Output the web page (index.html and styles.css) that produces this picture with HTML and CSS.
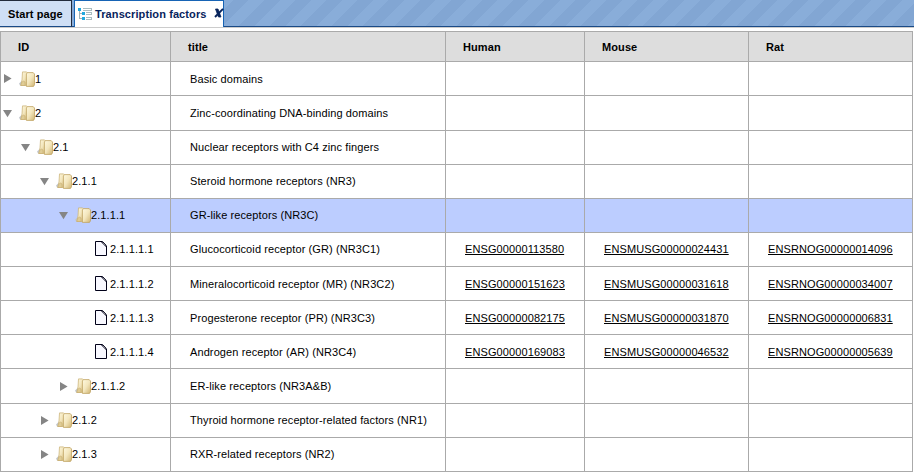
FILE: index.html
```html
<!DOCTYPE html>
<html lang="en">
<head>
<meta charset="utf-8">
<title>Transcription factors</title>
<link rel="stylesheet" href="styles.css">
</head>
<body>
<svg class="defs" width="0" height="0">
  <defs>
    <linearGradient id="g1" x1="0" y1="0" x2="1" y2="1"><stop offset="0" stop-color="#fff9df"/><stop offset=".5" stop-color="#f3e6bd"/><stop offset="1" stop-color="#d0b472"/></linearGradient>
    <symbol id="folder" viewBox="0 0 16 16">
      <path d="M0 12.5L3 9.5V14.5H1Z" fill="#c3c8d0"/>
      <path d="M3.5 .9H7.6L8.6 1.9V14.5H1.8L3 9Z" fill="url(#g1)" stroke="#cdb67c" stroke-width=".8"/>
      <path d="M2.6 11.5Q4.5 8.8 6 11V14.5H1.8Z" fill="#dfcc96" stroke="#c2a666" stroke-width=".5"/>
      <path d="M7.4 3L8.4 1.6H14.2L15.5 3V13.8L14.5 15.4H7.4Z" fill="url(#g1)" stroke="#c0a363" stroke-width=".8"/>
    </symbol>
    <symbol id="file" viewBox="0 0 12 15">
      <path d="M.5 .5H7.5L11.5 5V14.5H.5Z" fill="#f8f8ff" stroke="#000018"/>
      <path d="M6 1L11 6V4L8 1Z" fill="#000018"/><path d="M7.5 1.5L10.5 4.5" stroke="#ddd" stroke-width=".6"/>
    </symbol>
    <symbol id="right" viewBox="0 0 9 9"><path d="M1 0V9L8.6 4.5Z" fill="#858585"/></symbol>
    <symbol id="down" viewBox="0 0 9 9"><path d="M0 1H9L4.5 8.2Z" fill="#858585"/></symbol>
  </defs>
</svg>
<nav class="tabs">
  <div class="tab start">Start page</div>
  <div class="tab active">
    <svg class="tree" width="14" height="12" viewBox="0 0 14 12" shape-rendering="crispEdges">
      <path d="M1.5 3V10.5H5M1.5 5.5H5" fill="none" stroke="#9fb2b8"/>
      <path d="M0 0H3V3H0ZM4 4H7V7H4ZM4 9H7V12H4Z" fill="#22a9e0"/>
      <path d="M5 .5H13.5V2.5H5M8 4.5H13.5V6.5H8M8 9.5H13.5V11.5H8" fill="none" stroke="#a9bcc0"/>
    </svg>
    <span class="name">Transcription factors</span>
    <svg class="close" width="10" height="10" viewBox="0 0 10 10"><path d="M1.5 1H4L7 9H4.5Z" fill="#08245c" stroke="#08245c" stroke-width=".8"/><path d="M9 .9L1 9" stroke="#08245c" stroke-width="1.9"/></svg>
  </div>
</nav>
<table class="grid">
  <colgroup><col class="c1"><col class="c2"><col class="c3"><col class="c4"><col class="c5"></colgroup>
  <thead><tr><th>ID</th><th>title</th><th>Human</th><th>Mouse</th><th>Rat</th></tr></thead>
  <tbody>
    <tr><td><div class="node l0"><svg class="arr"><use href="#right"/></svg><svg class="fold"><use href="#folder"/></svg>1</div></td><td>Basic domains</td><td></td><td></td><td></td></tr>
    <tr class="tall"><td><div class="node l0"><svg class="arr"><use href="#down"/></svg><svg class="fold"><use href="#folder"/></svg>2</div></td><td>Zinc-coordinating DNA-binding domains</td><td></td><td></td><td></td></tr>
    <tr class="up"><td><div class="node l1"><svg class="arr"><use href="#down"/></svg><svg class="fold"><use href="#folder"/></svg>2.1</div></td><td>Nuclear receptors with C4 zinc fingers</td><td></td><td></td><td></td></tr>
    <tr class="up"><td><div class="node l2"><svg class="arr"><use href="#down"/></svg><svg class="fold"><use href="#folder"/></svg>2.1.1</div></td><td>Steroid hormone receptors (NR3)</td><td></td><td></td><td></td></tr>
    <tr class="up sel"><td><div class="node l3"><svg class="arr"><use href="#down"/></svg><svg class="fold"><use href="#folder"/></svg>2.1.1.1</div></td><td>GR-like receptors (NR3C)</td><td></td><td></td><td></td></tr>
    <tr class="up"><td><div class="node leaf"><svg class="file"><use href="#file"/></svg>2.1.1.1.1</div></td><td>Glucocorticoid receptor (GR) (NR3C1)</td><td><a>ENSG00000113580</a></td><td><a>ENSMUSG00000024431</a></td><td><a>ENSRNOG00000014096</a></td></tr>
    <tr><td><div class="node leaf"><svg class="file"><use href="#file"/></svg>2.1.1.1.2</div></td><td>Mineralocorticoid receptor (MR) (NR3C2)</td><td><a>ENSG00000151623</a></td><td><a>ENSMUSG00000031618</a></td><td><a>ENSRNOG00000034007</a></td></tr>
    <tr><td><div class="node leaf"><svg class="file"><use href="#file"/></svg>2.1.1.1.3</div></td><td>Progesterone receptor (PR) (NR3C3)</td><td><a>ENSG00000082175</a></td><td><a>ENSMUSG00000031870</a></td><td><a>ENSRNOG00000006831</a></td></tr>
    <tr><td><div class="node leaf"><svg class="file"><use href="#file"/></svg>2.1.1.1.4</div></td><td>Androgen receptor (AR) (NR3C4)</td><td><a>ENSG00000169083</a></td><td><a>ENSMUSG00000046532</a></td><td><a>ENSRNOG00000005639</a></td></tr>
    <tr class="tall"><td><div class="node l3"><svg class="arr"><use href="#right"/></svg><svg class="fold"><use href="#folder"/></svg>2.1.1.2</div></td><td>ER-like receptors (NR3A&amp;B)</td><td></td><td></td><td></td></tr>
    <tr class="up"><td><div class="node l2"><svg class="arr"><use href="#right"/></svg><svg class="fold"><use href="#folder"/></svg>2.1.2</div></td><td>Thyroid hormone receptor-related factors (NR1)</td><td></td><td></td><td></td></tr>
    <tr class="up"><td><div class="node l2"><svg class="arr"><use href="#right"/></svg><svg class="fold"><use href="#folder"/></svg>2.1.3</div></td><td>RXR-related receptors (NR2)</td><td></td><td></td><td></td></tr>
  </tbody>
</table>
</body>
</html>
```
FILE: styles.css
```css
* { box-sizing: border-box; }
body { margin: 0; width: 914px; height: 472px; overflow: hidden; background: #fff; color: #000; font: 11px/14px "Liberation Sans", Arial, sans-serif; letter-spacing: .1px; }
.defs { display: block; }
.tabs { display: flex; height: 28px; border-bottom: 1px solid #ccc; background: linear-gradient(#1a4a86, #1a4a86) 0 26px / 100% 1px no-repeat, repeating-linear-gradient(135deg, #89add9 0 11px, #82a6d3 11px 22px); }
.tab { font-weight: bold; }
.start { width: 72px; height: 27px; padding: 6px 0 0 8px; background: #cfdff5; border: solid #222b3c; border-width: 1px 1px 1px 0; border-bottom-color: #1a4a86; white-space: nowrap; }
.active { display: flex; width: 150px; height: 27px; margin-left: 2px; padding: 6px 0 0 3px; background: #fff; border: 1px solid #1764b5; border-bottom: 0; color: #08245c; white-space: nowrap; }
.tree { flex: none; margin: 1px 3px 0 0; }
.name { flex: none; width: 119px; }
.close { flex: none; margin-top: 1px; }
.grid { width: 913px; margin-top: 3px; border-collapse: separate; border-spacing: 0; table-layout: fixed; border: solid #aaa; border-width: 1px 0 0 1px; }
.c1 { width: 170px; }
.c2 { width: 275px; }
.c3 { width: 139px; }
.c4 { width: 164px; }
.c5 { width: 164px; }
th, td { border: solid #aaa; border-width: 0 1px 1px 0; padding: 0 0 0 19px; height: 34px; text-align: left; white-space: nowrap; vertical-align: middle; }
th { height: 30px; padding: 0 0 0 17px; background: #ddd; }
td:first-child { padding-left: 0; }
.tall td { height: 35px; }
.up td { padding-bottom: 2px; }
.sel td { background: #bccdff; }
.node { display: flex; align-items: center; }
.arr { width: 9px; height: 9px; margin-right: 7px; }
.up .arr { margin-top: 1px; }
.fold { width: 16px; height: 16px; }
.file { width: 12px; height: 15px; margin-right: 3px; }
.l0 { padding-left: 2px; }
.l1 { padding-left: 20px; }
.l2 { padding-left: 39px; }
.l3 { padding-left: 58px; }
.leaf { padding-left: 94px; }
a { color: #000; text-decoration: underline; }
```
